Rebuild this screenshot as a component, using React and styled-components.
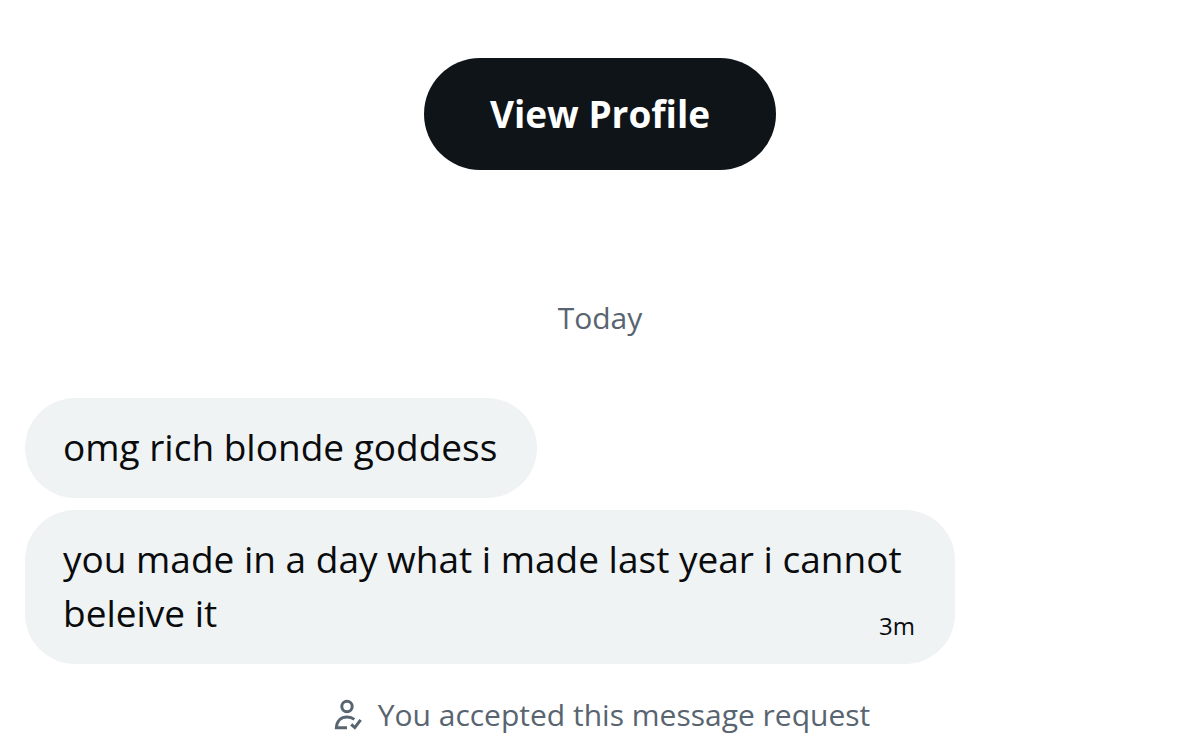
import React from "react";
import styled, { createGlobalStyle } from "styled-components";

const GlobalStyle = createGlobalStyle`
  *, *::before, *::after { box-sizing: border-box; }
  body {
    margin: 0;
    background: #ffffff;
    color: #0a0b0d;
    font-family: "Open Sans", "Noto Sans", sans-serif;
  }
`;

const Conversation = styled.main`
  display: flex;
  flex-direction: column;
  padding: 58px 25px 12px;
`;

const ProfileButton = styled.button`
  align-self: center;
  height: 112px;
  padding: 0 66px;
  border: 0;
  border-radius: 56px;
  background: #0f1419;
  color: #ffffff;
  font: inherit;
  font-size: 37px;
  font-weight: 700;
  line-height: 54px;
  white-space: nowrap;
  cursor: pointer;
`;

const DayLabel = styled.h2`
  margin: 128px 0 0;
  color: #586570;
  font-size: 30px;
  font-weight: 400;
  line-height: 40px;
  text-align: center;
`;

const MessageList = styled.ul`
  display: flex;
  flex-direction: column;
  align-items: flex-start;
  gap: 12px;
  margin: 60px 0 0;
  padding: 0;
  list-style: none;
`;

const Bubble = styled.li`
  max-width: calc(100% - 220px);
  padding: 22px 40px 24px 38px;
  border-radius: 50px;
  background: #eff3f4;
`;

const MessageText = styled.p`
  margin: 0;
  font-size: 37px;
  line-height: 54px;
`;

const SentTime = styled.time`
  float: right;
  padding-top: 26px;
  font-size: 24px;
  line-height: 28px;
`;

const Notice = styled.p`
  display: flex;
  align-items: center;
  justify-content: center;
  gap: 16px;
  margin: 31px 0 0;
  padding-left: 4px;
  color: #586570;
  font-size: 30px;
  line-height: 40px;
`;

const NoticeIcon = styled.svg`
  flex: none;
  width: 28px;
  height: 32px;
`;

function AcceptedIcon() {
  return (
    <NoticeIcon viewBox="0 0 28 32" fill="none" stroke="currentColor" strokeWidth="3" aria-hidden="true">
      <circle cx="13" cy="7.5" r="5.2" />
      <path d="M20.3 20.4C18.4 18.9 16 18.1 13.2 18.1C7 18.1 2.8 22 2.4 28.8H13" />
      <path d="M17.2 25.3L20.8 28.6L26.6 20.8" />
    </NoticeIcon>
  );
}

const messages = [
  { id: 1, text: "omg rich blonde goddess" },
  { id: 2, text: "you made in a day what i made last year i cannot beleive it", sent: "3m" },
];

export default function App() {
  return (
    <>
      <GlobalStyle />
      <Conversation>
        <ProfileButton type="button">View Profile</ProfileButton>
        <DayLabel>Today</DayLabel>
        <MessageList>
          {messages.map((message) => (
            <Bubble key={message.id}>
              <MessageText>
                {message.text}
                {message.sent && <SentTime>{message.sent}</SentTime>}
              </MessageText>
            </Bubble>
          ))}
        </MessageList>
        <Notice>
          <AcceptedIcon />
          You accepted this message request
        </Notice>
      </Conversation>
    </>
  );
}
